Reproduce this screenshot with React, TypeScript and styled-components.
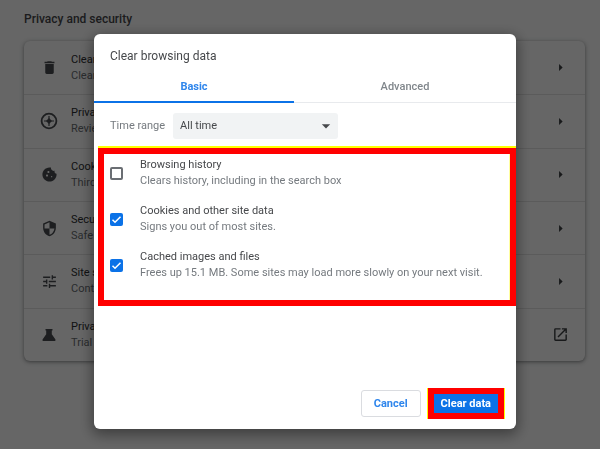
import React from "react";
import styled, { createGlobalStyle } from "styled-components";
import {
  MdArrowDropDown,
  MdArrowRight,
  MdCookie,
  MdDelete,
  MdOpenInNew,
  MdSecurity,
  MdTune,
} from "react-icons/md";

const GlobalStyle = createGlobalStyle`
  * { box-sizing: border-box; }
  body {
    margin: 0;
    background: #fff;
    color: #202124;
    font: 11px/16px Roboto, "Liberation Sans", sans-serif;
  }
  button, select, input { font: inherit; }
`;

const Page = styled.main`
  padding: 11px 15px 24px 24px;
`;

const PageTitle = styled.h1`
  margin: 0 0 14px;
  font-size: 12px;
  line-height: 16px;
  font-weight: 500;
  color: #46484b;
`;

const Card = styled.ul`
  display: grid;
  grid-auto-rows: 1fr;
  min-height: 320px;
  margin: 0;
  padding: 0;
  list-style: none;
  border-radius: 6px;
  box-shadow: 0 1px 3px rgba(60, 64, 67, 0.4), 0 1px 5px 1px rgba(60, 64, 67, 0.2);
`;

const Row = styled.li`
  display: flex;
  align-items: center;
  gap: 12px;
  padding: 0 15px;

  & + & {
    border-top: 1px solid #e4e4e4;
  }
`;

const RowIcon = styled.span`
  display: grid;
  place-items: center;
  width: 20px;
  color: #4a4d51;
`;

const RowText = styled.div`
  flex: 1;
  min-width: 0;
`;

const RowTitle = styled.div`
  color: #2c2e31;
`;

const RowNote = styled.div`
  color: #6a6e73;
`;

const RowButton = styled.button`
  display: grid;
  place-items: center;
  width: 20px;
  height: 20px;
  padding: 0;
  border: 0;
  background: none;
  color: #3c4043;
`;

const Backdrop = styled.div`
  position: fixed;
  inset: 0;
  display: flex;
  justify-content: center;
  align-items: flex-start;
  padding: 34px 84px 20px 94px;
  background: rgba(0, 0, 0, 0.6);
`;

const Dialog = styled.section`
  display: flex;
  flex-direction: column;
  width: 100%;
  max-width: 512px;
  background: #fff;
  border-radius: 6px;
  box-shadow: 0 4px 14px 2px rgba(0, 0, 0, 0.4);
`;

const DialogTitle = styled.h2`
  margin: 0;
  padding: 14px 16px 6px;
  font-size: 12px;
  line-height: 16px;
  font-weight: 400;
  color: #46484b;
`;

const Tabs = styled.div`
  display: flex;
  border-bottom: 1px solid #e8eaed;
`;

const Tab = styled.button<{ $active?: boolean }>`
  flex: ${(p) => (p.$active ? "0 0 200px" : "1")};
  height: 33px;
  margin-bottom: -1px;
  padding: 2px 0 0;
  border: 0;
  border-bottom: 2px solid ${(p) => (p.$active ? "#0b72e7" : "transparent")};
  background: none;
  font-weight: ${(p) => (p.$active ? 700 : 500)};
  color: ${(p) => (p.$active ? "#2f86ec" : "#80868b")};
`;

const RangeRow = styled.div`
  display: flex;
  align-items: center;
  gap: 8px;
  padding: 10px 16px 9px;
  color: #757a7f;
`;

const SelectBox = styled.div`
  display: grid;
  align-items: center;
  width: 165px;
  border-radius: 3px;
  background: #f1f3f4;
  color: #46484b;

  & > * {
    grid-area: 1 / 1;
  }

  & > svg {
    justify-self: end;
    margin-right: 2px;
    pointer-events: none;
  }
`;

const Select = styled.select`
  appearance: none;
  height: 26px;
  padding: 0 24px 0 7px;
  border: 0;
  border-radius: 3px;
  background: transparent;
  color: inherit;
`;

const Options = styled.div`
  display: flex;
  flex-direction: column;
  gap: 14px;
  margin: 0 0 0 4px;
  padding: 3px 6px 19px;
  border: 6px solid #f00;
  box-shadow: 0 -2px #ff0, inset -1px 0 #ffffa0;
`;

const Option = styled.label`
  display: flex;
  align-items: center;
  gap: 17px;
`;

const Tick = styled.input`
  appearance: none;
  flex: none;
  width: 13px;
  height: 13px;
  margin: 0;
  border: 2px solid #6a6e73;
  border-radius: 2px;

  &:checked {
    border: 0;
    background: #0b72e7;
  }
`;

const TickBox = styled.span`
  display: grid;
  place-items: center;

  & > * {
    grid-area: 1 / 1;
  }

  & > svg {
    visibility: hidden;
    pointer-events: none;
  }

  & > input:checked + svg {
    visibility: visible;
  }
`;

const OptionTitle = styled.div`
  color: #46484b;
`;

const OptionNote = styled.div`
  color: #757a7f;
`;

const Actions = styled.footer`
  display: flex;
  justify-content: flex-end;
  align-items: center;
  gap: 7px;
  padding: 82px 12px 10px;
`;

const CancelButton = styled.button`
  height: 27px;
  padding: 0 12px;
  border: 1px solid #dadce0;
  border-radius: 3px;
  background: #fff;
  color: #2f86ec;
  font-weight: 700;
`;

const ClearButton = styled.button`
  height: 31px;
  padding: 0 7px;
  border: 6px solid #f00;
  background: #0b72e7;
  box-shadow: -1px 0 #ff0, 1px 0 #ff0;
  color: #fff;
  font-weight: 700;
`;

const CompassIcon = () => (
  <svg width="18" height="18" viewBox="0 0 18 18" fill="none" stroke="currentColor">
    <circle cx="9" cy="9" r="7.4" strokeWidth="1.8" />
    <path d="M9 4v10M4 9h10" strokeWidth="1.2" />
    <path d="M9 6 12 9 9 12 6 9Z" fill="currentColor" stroke="none" />
  </svg>
);

const FlaskIcon = () => (
  <svg width="14" height="14" viewBox="0 0 14 14" fill="currentColor">
    <path d="M3.5 1h7v1.5H9.8v3.7l3.5 5c.6.9.1 1.8-.9 1.8H1.6c-1 0-1.5-.9-.9-1.8l3.5-5V2.5h-.7Z" />
  </svg>
);

const rows = [
  { title: "Clear browsing data", note: "Clear history, cookies, cache, and more", icon: <MdDelete size={17} /> },
  { title: "Privacy Guide", note: "Review key privacy and security controls", icon: <CompassIcon /> },
  { title: "Cookies and other site data", note: "Third-party cookies are blocked in Incognito mode", icon: <MdCookie size={17} /> },
  { title: "Security", note: "Safe Browsing and other security settings", icon: <MdSecurity size={17} /> },
  { title: "Site settings", note: "Controls what information sites can use and show", icon: <MdTune size={17} /> },
  { title: "Privacy Sandbox", note: "Trial features are on", icon: <FlaskIcon />, external: true },
];

const options = [
  { title: "Browsing history", note: "Clears history, including in the search box", checked: false },
  { title: "Cookies and other site data", note: "Signs you out of most sites.", checked: true },
  {
    title: "Cached images and files",
    note: "Frees up 15.1 MB. Some sites may load more slowly on your next visit.",
    checked: true,
  },
];

export default function App() {
  return (
    <>
      <GlobalStyle />
      <Page>
        <PageTitle>Privacy and security</PageTitle>
        <Card>
          {rows.map((row) => (
            <Row key={row.title}>
              <RowIcon>{row.icon}</RowIcon>
              <RowText>
                <RowTitle>{row.title}</RowTitle>
                <RowNote>{row.note}</RowNote>
              </RowText>
              <RowButton aria-label={row.title}>
                {row.external ? <MdOpenInNew size={17} /> : <MdArrowRight size={17} />}
              </RowButton>
            </Row>
          ))}
        </Card>
      </Page>
      <Backdrop>
        <Dialog role="dialog" aria-modal="true" aria-labelledby="dialog-title">
          <DialogTitle id="dialog-title">Clear browsing data</DialogTitle>
          <Tabs role="tablist">
            <Tab role="tab" aria-selected="true" $active>
              Basic
            </Tab>
            <Tab role="tab" aria-selected="false">
              Advanced
            </Tab>
          </Tabs>
          <RangeRow>
            <label htmlFor="range">Time range</label>
            <SelectBox>
              <Select id="range" defaultValue="All time">
                <option>All time</option>
              </Select>
              <MdArrowDropDown size={20} />
            </SelectBox>
          </RangeRow>
          <Options>
            {options.map((option) => (
              <Option key={option.title}>
                <TickBox>
                  <Tick type="checkbox" defaultChecked={option.checked} />
                  <svg width="13" height="13" viewBox="0 0 13 13" fill="none" stroke="#fff" strokeWidth="1.5">
                    <path d="m2.5 6.8 2.5 2.5 5.5-5.6" />
                  </svg>
                </TickBox>
                <div>
                  <OptionTitle>{option.title}</OptionTitle>
                  <OptionNote>{option.note}</OptionNote>
                </div>
              </Option>
            ))}
          </Options>
          <Actions>
            <CancelButton>Cancel</CancelButton>
            <ClearButton>Clear data</ClearButton>
          </Actions>
        </Dialog>
      </Backdrop>
    </>
  );
}
